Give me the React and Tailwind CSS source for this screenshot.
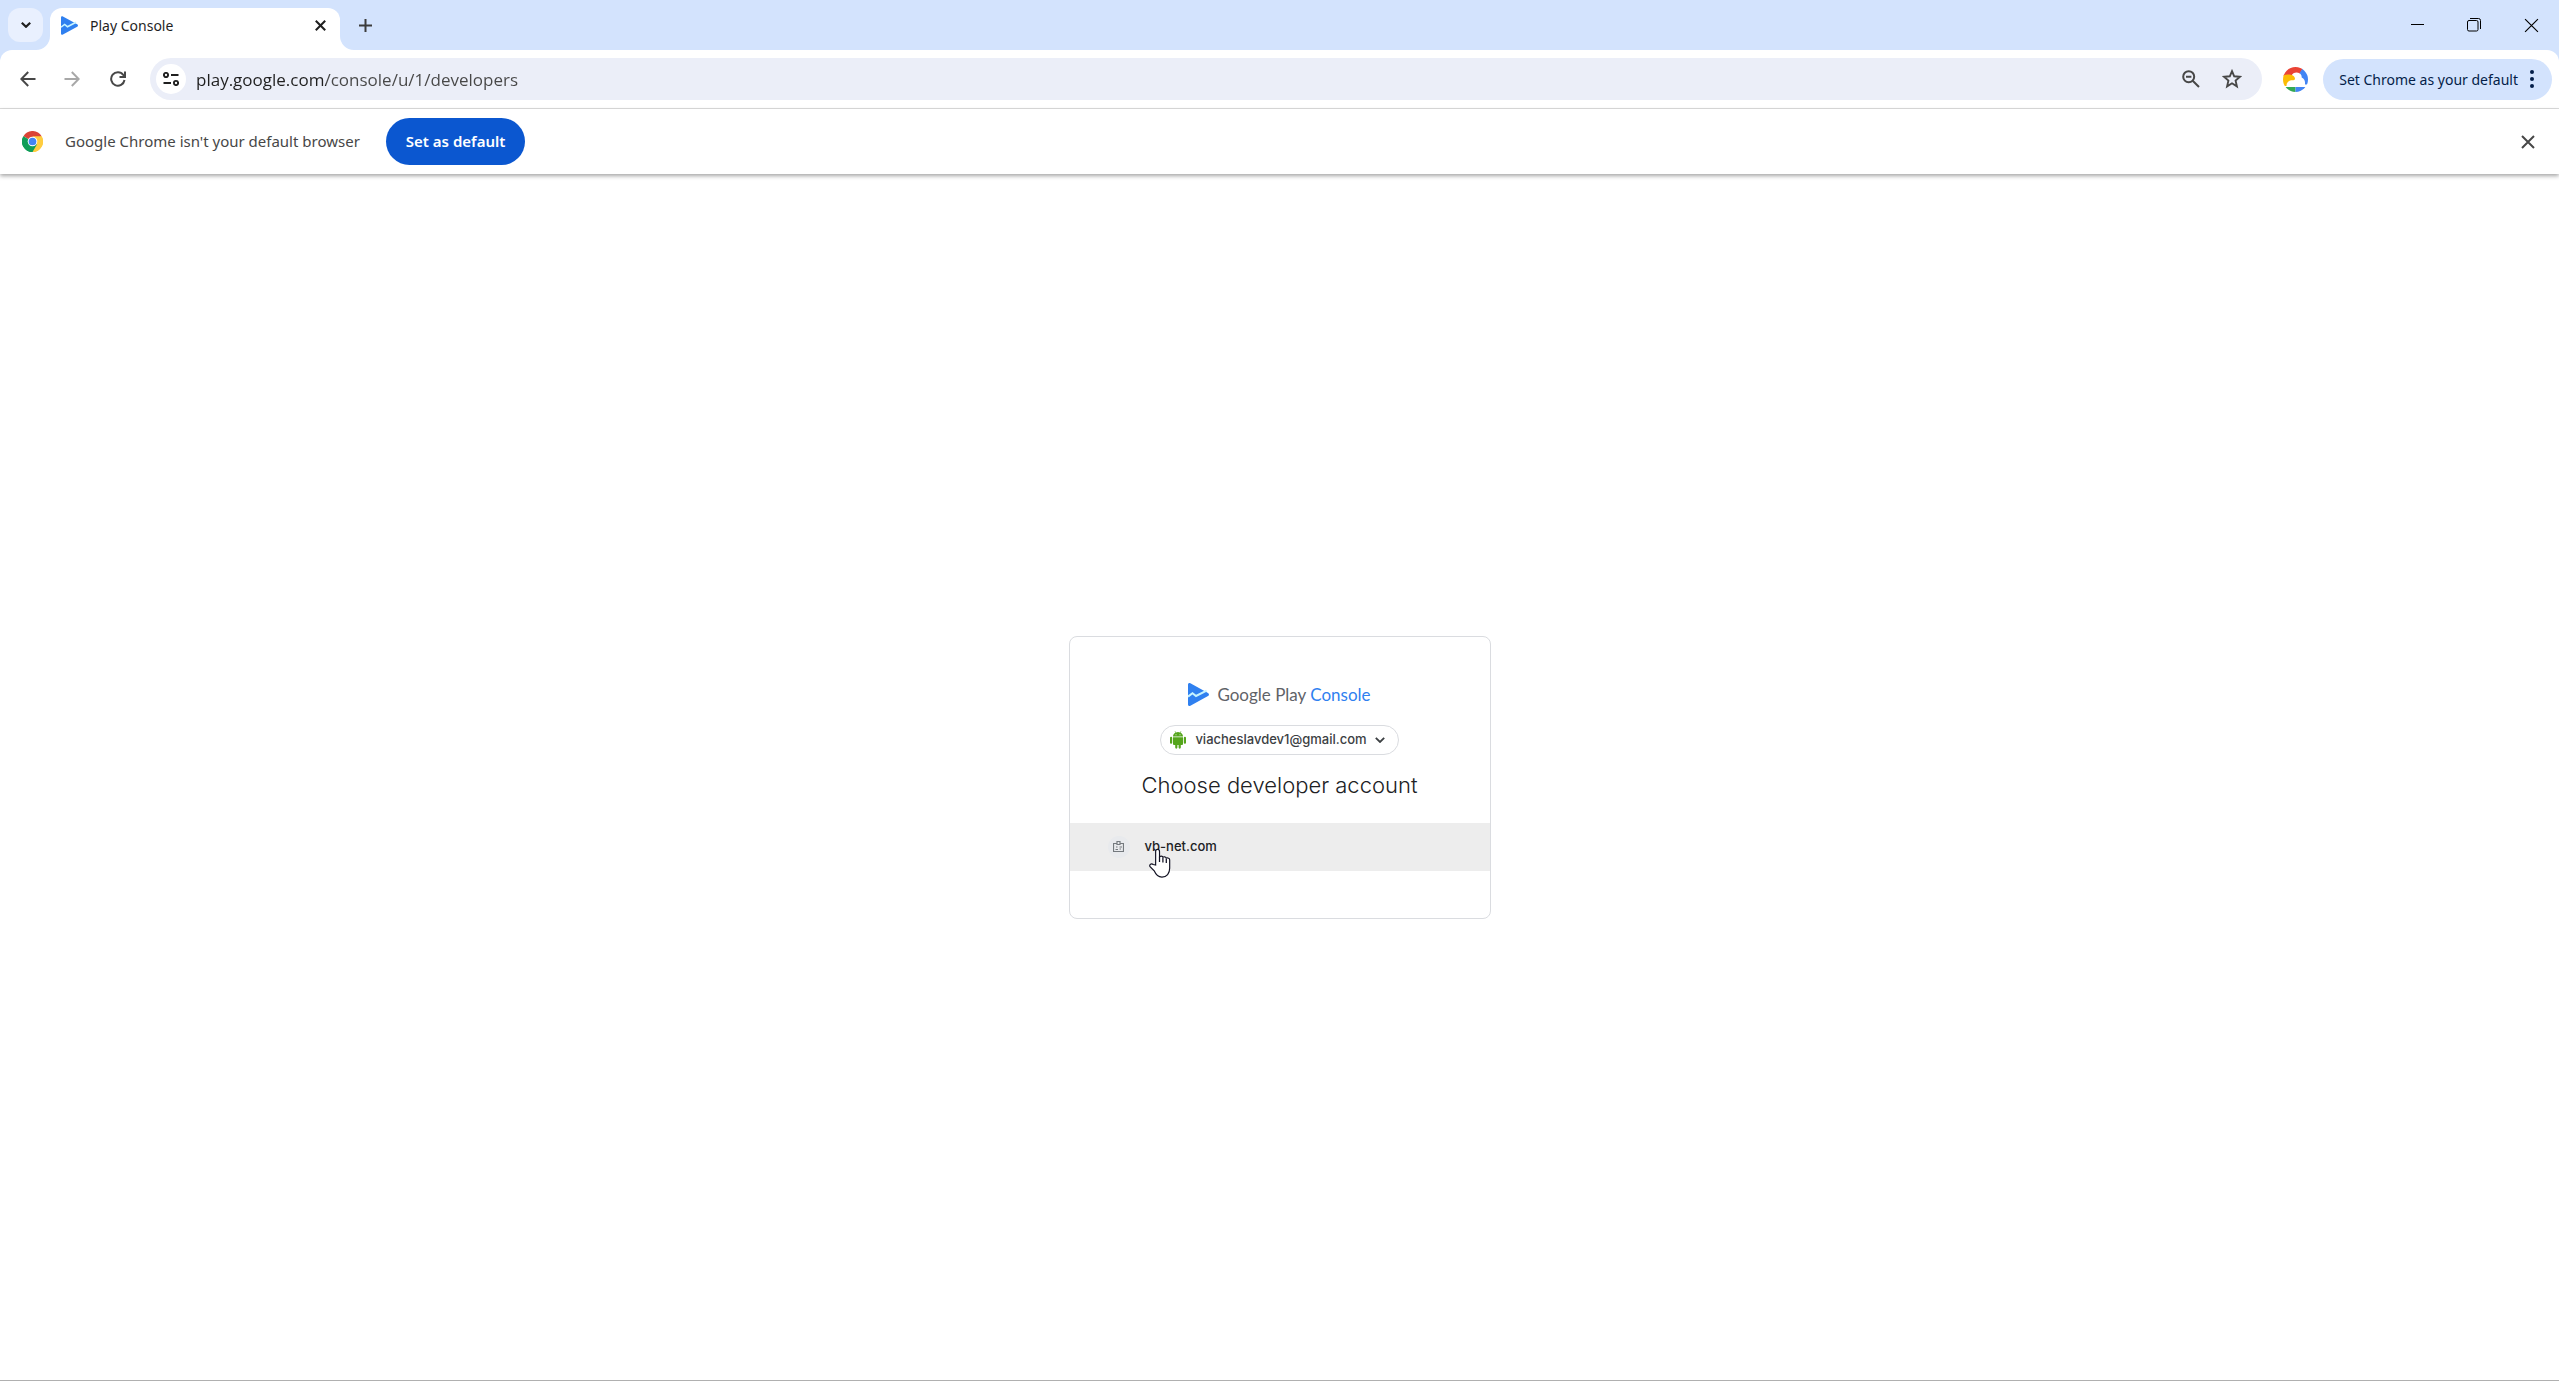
import React, { useState } from "react";

const PlayLogo = ({ className }) => (
  <svg className={className} viewBox="0 0 21 23" aria-hidden="true">
    <path d="M0 1.6C0 .3 1.2-.3 2.4.3L20 9.900c1.300.7 1.300 2.500 0 3.200L2.400 22.700C1.200 23.300 0 22.700 0 21.400Z" fill="#2f80f0" />
    <path d="M0 13.600 4.500 10.200 8 13 18.600 7.600" fill="none" stroke="#c6f3ff" strokeWidth="2" />
  </svg>
);

const ChromeLogo = ({ className }) => (
  <svg className={className} viewBox="0 0 48 48" aria-hidden="true">
    <path d="M24 24 3.200 12A24 24 0 0 1 44.800 12Z" fill="#db4437" />
    <path d="M24 24 44.800 12A24 24 0 0 1 24 48Z" fill="#ffcd40" />
    <path d="M24 24V48A24 24 0 0 1 3.200 12Z" fill="#0f9d58" />
    <path d="M24 12H44.800A24 24 0 0 1 24 48L34.400 30Z" fill="#ffcd40" />
    <path d="M13.600 30 3.200 12A24 24 0 0 0 24 48L34.400 30Z" fill="#0f9d58" />
    <circle cx="24" cy="24" r="11" fill="#fff" />
    <circle cx="24" cy="24" r="8.800" fill="#4285f4" />
  </svg>
);

const CloudAvatar = ({ className }) => (
  <svg className={className} viewBox="0 0 25 25" aria-hidden="true">
    <defs>
      <clipPath id="avatar">
        <circle cx="12.500" cy="12.500" r="12.500" />
      </clipPath>
    </defs>
    <g clipPath="url(#avatar)">
      <path d="M0 0H25V25H0Z" fill="#fff" />
      <path d="M0 9V0H20.500L17 6.500C13 4.500 10 6 8.500 8.500Z" fill="#ea4335" />
      <path d="M20 1 16.500 6C18.500 7.500 18.700 9 18.700 10.600 21 11.500 22.500 14 22 17.500H25V0Z" fill="#4285f4" />
      <path d="M0 8.600C5 6.500 11.500 7.500 12 11.500 12 13.500 9.500 13.500 8 13.200 5 14 3.500 16 3.500 19H0Z" fill="#fbbc04" />
      <path d="M0 20H12.500V25H0Z" fill="#34a853" />
      <path d="M12.500 20H25V25H12.500Z" fill="#4285f4" />
    </g>
  </svg>
);

const AndroidIcon = ({ className }) => (
  <svg className={className} viewBox="0 0 16 18" fill="#55a51c" aria-hidden="true">
    <path d="M3 5.600C3 3.600 4 2.400 5.500 1.700L4.700.4 5 .1 6 1.500a5.600 5.600 0 0 1 4 0L11 .1l.3.3-.8 1.300C12 2.400 13 3.600 13 5.600Z" />
    <path d="M3 6.200H13V13a1 1 0 0 1-1 1H10.800V16.600a1.100 1.100 0 0 1-2.200 0V14H7.400V16.600a1.100 1.100 0 0 1-2.200 0V14H4a1 1 0 0 1-1-1Z" />
    <rect x="0" y="5.800" width="2.200" height="7" rx="1.100" />
    <rect x="13.800" y="5.800" width="2.200" height="7" rx="1.100" />
    <circle cx="6" cy="3.700" r=".5" fill="#fff" />
    <circle cx="10" cy="3.700" r=".5" fill="#fff" />
  </svg>
);

const HandCursor = ({ className }) => (
  <svg className={className} viewBox="0 0 24 32" aria-hidden="true">
    <path
      d="M7.500 17.500V3.500a2 2 0 0 1 4 0V9.500c0-1.500 3.500-1.500 3.500.5 0-1.500 3.500-1.200 3.500.8 0-1 3.500-.8 3.500 1.200V21c0 5-3 9-8 9-4.500 0-6.500-3-8-6.500L1.500 19c-.8-2 1.500-3.500 3.500-2Z"
      fill="#fff"
      stroke="#111122"
      strokeWidth="1.200"
    />
    <path d="M11.500 9V14.500M15 10V15M18.500 10.800V15.500" stroke="#111122" strokeWidth="1.300" fill="none" />
  </svg>
);

const Chevron = ({ className }) => (
  <svg className={className} viewBox="0 0 10 6" fill="none" stroke="currentColor" strokeWidth="1.800" aria-hidden="true">
    <path d="M.8.8 5 5 9.200.8" />
  </svg>
);

const Cross = ({ className, weight = 2 }) => (
  <svg className={className} viewBox="0 0 14 14" fill="none" stroke="currentColor" strokeWidth={weight} aria-hidden="true">
    <path d="M1 1 13 13M13 1 1 13" />
  </svg>
);

const TabStrip = () => (
  <div className="flex h-[50px] items-end bg-[#d3e3fd]">
    <button aria-label="Search tabs" className="mb-2 ml-2 flex h-[34px] w-[35px] items-center justify-center rounded-xl bg-[#e9f0fe] text-[#1f1f1f]">
      <svg className="h-[6px] w-[10px]" viewBox="0 0 10 6" fill="none" stroke="currentColor" strokeWidth="2.200">
        <path d="M.8.8 5 4.800 9.200.8" />
      </svg>
    </button>
    <div className="relative ml-[7px] flex h-[42px] w-[290px] items-center rounded-t-xl bg-white pb-2 pl-[11px] pr-3">
      <svg className="absolute bottom-0 -left-[14px] size-[14px]" viewBox="0 0 14 14" fill="#fff">
        <path d="M14 0V14H0A14 14 0 0 0 14 0Z" />
      </svg>
      <svg className="absolute bottom-0 -right-[14px] size-[14px]" viewBox="0 0 14 14" fill="#fff">
        <path d="M0 0V14H14A14 14 0 0 1 0 0Z" />
      </svg>
      <PlayLogo className="h-[19px] w-[17px]" />
      <span className="ml-3 text-[14px] text-[#1f1f1f]">Play Console</span>
      <button aria-label="Close tab" className="ml-auto flex size-4 items-center justify-center text-[#1f1f1f]">
        <Cross className="size-[11px]" weight={2.6} />
      </button>
    </div>
    <button aria-label="New tab" className="mb-[17px] ml-[17px] flex size-4 items-center justify-center text-[#3c3c3c]">
      <svg className="size-[13px]" viewBox="0 0 13 13" stroke="currentColor" strokeWidth="2">
        <path d="M6.500 0V13M0 6.500H13" />
      </svg>
    </button>
    <div className="ml-auto flex h-full items-center gap-[42px] pr-5">
      <button aria-label="Minimize" className="flex h-4 w-[15px] items-center justify-center">
        <svg className="size-[13px]" viewBox="0 0 13 13" stroke="#000">
          <path d="M0 5.500H13" />
        </svg>
      </button>
      <button aria-label="Restore" className="flex h-4 w-[15px] items-center justify-start">
        <svg className="size-[14px]" viewBox="0 0 14 14" fill="none" stroke="#000">
          <rect x=".5" y="2.500" width="10.500" height="10.500" rx="1.500" />
          <path d="M3 .5H11.500a2 2 0 0 1 2 2V11" />
        </svg>
      </button>
      <button aria-label="Close window" className="flex h-4 w-[15px] items-center justify-center text-black">
        <Cross className="size-[15px]" weight={1.1} />
      </button>
    </div>
  </div>
);

const Toolbar = () => {
  const [url, setUrl] = useState("play.google.com/console/u/1/developers");

  return (
    <div className="bg-[#d3e3fd]">
      <div className="flex h-[59px] items-center rounded-t-xl border-b border-[#dddddd] bg-white pr-[7px]">
        <button aria-label="Back" className="ml-5 text-[#474747]">
          <svg className="size-4" viewBox="0 0 16 16" fill="none" stroke="currentColor" strokeWidth="2">
            <path d="M15.500 8H1.500M8.200 1 1.300 8l6.900 7" />
          </svg>
        </button>
        <button aria-label="Forward" className="ml-7 text-[#a8a8a8]" disabled>
          <svg className="size-4" viewBox="0 0 16 16" fill="none" stroke="currentColor" strokeWidth="2">
            <path d="M.5 8H14.500M7.800 1 14.700 8l-6.900 7" />
          </svg>
        </button>
        <button aria-label="Reload" className="ml-[30px] text-[#474747]">
          <svg className="size-4" viewBox="0 0 16 16" fill="none" stroke="currentColor" strokeWidth="2">
            <path d="M14.500 9A6.700 6.700 0 1 1 13.300 4L14.500 5.500M15 .5V6H9.500" />
          </svg>
        </button>
        <div className="ml-6 flex h-[42px] flex-1 items-center rounded-full bg-[#ebeef8] pl-1.5 pr-5 text-[#474747]">
          <button aria-label="View site information" className="flex size-[30px] items-center justify-center rounded-full bg-white text-[#1f1f1f]">
            <svg className="h-[14px] w-4" viewBox="0 0 16 14" fill="none" stroke="currentColor" strokeWidth="1.900">
              <circle cx="3" cy="3" r="2.100" />
              <circle cx="13" cy="11" r="2.100" />
              <path d="M8 3H15.500M.5 11H8" />
            </svg>
          </button>
          <input
            aria-label="Address and search bar"
            value={url}
            onChange={(e) => setUrl(e.target.value)}
            className="ml-[10px] h-8 flex-1 bg-[linear-gradient(90deg,#1f1f1f_130px,#474747_130px)] bg-clip-text font-['Open_Sans',sans-serif] text-[17px] text-transparent outline-none"
          />
          <button aria-label="Zoom" className="mr-[22px]">
            <svg className="size-[18px]" viewBox="0 0 18 18" fill="none" stroke="currentColor" strokeWidth="2">
              <circle cx="6.700" cy="6.700" r="5.500" />
              <path d="M10.700 10.700 17 17M4 6.700H9.400" />
            </svg>
          </button>
          <button aria-label="Bookmark this tab">
            <svg className="size-5" viewBox="0 0 20 20" fill="none" stroke="currentColor" strokeWidth="1.900">
              <path d="M10 2.200 12.200 7.300 18 7.800 13.600 11.600 14.900 17.400 10 14.300 5.100 17.400 6.400 11.600 2 7.800 7.800 7.300Z" />
            </svg>
          </button>
        </div>
        <button aria-label="Profile" className="ml-[21px]">
          <CloudAvatar className="size-[25px]" />
        </button>
        <button className="ml-[15px] flex h-[41px] items-center rounded-full bg-[#d3e3fd] pl-4 pr-[18px] text-[14px] text-[#041e49]">
          Set Chrome as your default
          <svg className="ml-3 h-[18px] w-1" viewBox="0 0 4 18" fill="currentColor">
            <circle cx="2" cy="2" r="2" />
            <circle cx="2" cy="9" r="2" />
            <circle cx="2" cy="16" r="2" />
          </svg>
        </button>
      </div>
    </div>
  );
};

const InfoBar = () => (
  <div className="z-10 flex h-[65px] items-center bg-white pl-[22px] pr-6 shadow-[0_2px_4px_rgba(0,0,0,0.35)]">
    <ChromeLogo className="size-[21px]" />
    <span className="ml-[22px] text-[15px] text-[#474747]">Google Chrome isn't your default browser</span>
    <button className="ml-[26px] h-[47px] rounded-full bg-[#0b57d0] px-5 text-[15px] font-semibold text-white">Set as default</button>
    <button aria-label="Dismiss" className="ml-auto text-[#474747]">
      <Cross className="size-[14px]" />
    </button>
  </div>
);

const AccountCard = () => (
  <div className="flex w-[422px] flex-col items-center rounded-lg border border-[#dadce0] pb-[47px] pt-[46px] font-['Inter',sans-serif]">
    <div className="flex h-6 items-center">
      <PlayLogo className="h-[23px] w-[21px]" />
      <span className="ml-2 font-['Lato',sans-serif] text-[17px] text-[#5f6368]">
        Google Play <span className="text-[#2f80f0]">Console</span>
      </span>
    </div>
    <button className="mt-[18px] flex h-[30px] items-center rounded-full border border-[#dadce0] pl-[9px] pr-[13px] text-[13px] font-medium text-[#3c4043]">
      <AndroidIcon className="h-[18px] w-4" />
      <span className="ml-[9px]">viacheslavdev1@gmail.com</span>
      <Chevron className="ml-2 h-[6px] w-[10px]" />
    </button>
    <h1 className="mt-[14px] text-[22px] leading-8 font-light text-[#202124]">Choose developer account</h1>
    <a href="#vb-net" className="relative mt-[22px] flex h-12 w-full items-center bg-[#ededed] pl-[38px] text-[13px] font-medium text-[#202124]">
      <span className="flex size-[22px] items-center justify-center rounded-full bg-[#e8eaed]">
        <svg className="size-[11px]" viewBox="0 0 11 11" fill="none" stroke="#74797e" strokeWidth="1.200" aria-hidden="true">
          <path d="M4 2.500H.5V10.500H10.500V2.500H7M4 .5H7V3.500H4Z" />
          <path d="M2.500 8.500H5M3 6H4.500M6.500 6H9M6.500 8H8" />
        </svg>
      </span>
      <span className="ml-[15px]">vb-net.com</span>
      <HandCursor className="absolute left-[78px] top-[25px] h-[31px] w-6" />
    </a>
  </div>
);

const App = () => (
  <div className="flex min-h-screen flex-col border-b border-[#b0b0b0] bg-white font-['Noto_Sans',sans-serif]">
    <TabStrip />
    <Toolbar />
    <InfoBar />
    <main className="flex flex-1 items-center justify-center">
      <AccountCard />
    </main>
  </div>
);

export default App;
